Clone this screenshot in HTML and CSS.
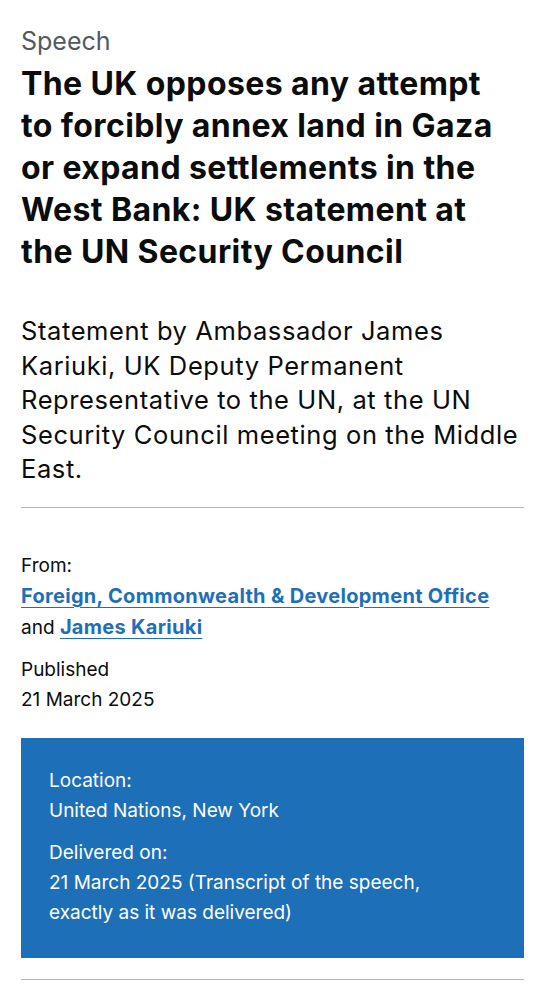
FILE: index.html
```html
<!DOCTYPE html>
<html lang="en">
<head>
  <meta charset="UTF-8">
  <meta name="viewport" content="width=device-width, initial-scale=1.0">
  <title>UK statement at the UN Security Council</title>
  <link rel="stylesheet" href="styles.css">
</head>
<body>

<main class="page">
  <!-- 标题区 -->
  <header class="title-block">
    <span class="caption">Speech</span>
    <h1 class="heading">The UK opposes any attempt to forcibly annex land in Gaza or expand settlements in the West Bank: UK statement at the UN Security Council</h1>
  </header>

  <p class="lead">Statement by Ambassador James Kariuki, UK Deputy Permanent Representative to the UN, at the UN Security Council meeting on the Middle East.</p>

  <hr class="rule">

  <!-- 元数据 -->
  <dl class="metadata">
    <div class="meta-group">
      <dt>From:</dt>
      <dd><a href="#">Foreign, Commonwealth &amp; Development Office</a></dd>
      <dd>and <a href="#">James Kariuki</a></dd>
    </div>
    <div class="meta-group">
      <dt>Published</dt>
      <dd>21 March 2025</dd>
    </div>
  </dl>

  <!-- 演讲信息 -->
  <dl class="speech-box">
    <div class="meta-group">
      <dt>Location:</dt>
      <dd>United Nations, New York</dd>
    </div>
    <div class="meta-group">
      <dt>Delivered on:</dt>
      <dd>21 March 2025 (Transcript of the speech, exactly as it was delivered)</dd>
    </div>
  </dl>

  <hr class="rule">
</main>

</body>
</html>
```

FILE: styles.css
```css
html,body{
  margin: 0;
  background-color: #fff;
  color: #0b0c0c;
  font-family: Inter, "Noto Sans", Arial, sans-serif;
}

.page{
  padding: 26px 21px 0;
}

.title-block{
  margin-bottom: 41px;
}
.caption{
  display: block;
  font-size: 25px;
  line-height: 30px;
  color: #505a5f;
  margin-bottom: 7px;
}
.heading{
  margin: 0 20px 0 0;
  font-size: 32px;
  line-height: 42px;
  font-weight: 700;
  letter-spacing: 0.4px;
}

.lead{
  margin: 0 0 20px;
  font-size: 25.5px;
  line-height: 34.5px;
  letter-spacing: 0.6px;
}

.rule{
  margin: 0;
  border: 0;
  border-top: 1px solid #b1b4b6;
}

.metadata,
.speech-box{
  margin: 0;
  font-size: 19px;
  line-height: 30px;
}
.metadata{
  padding: 43px 0 23px;
}
.meta-group + .meta-group{
  margin-top: 12px;
}
.metadata dt,
.metadata dd,
.speech-box dt,
.speech-box dd{
  margin: 0;
}

.metadata a{
  color: #1d70b8;
  font-size: 20px;
  font-weight: 700;
  letter-spacing: 0.3px;
  text-decoration: underline;
  text-decoration-thickness: 1px;
  text-underline-offset: 4px;
}

.speech-box{
  background-color: #1d70b8;
  color: #fff;
  padding: 28px 40px 30px 28px;
  margin-bottom: 21px;
}
```
